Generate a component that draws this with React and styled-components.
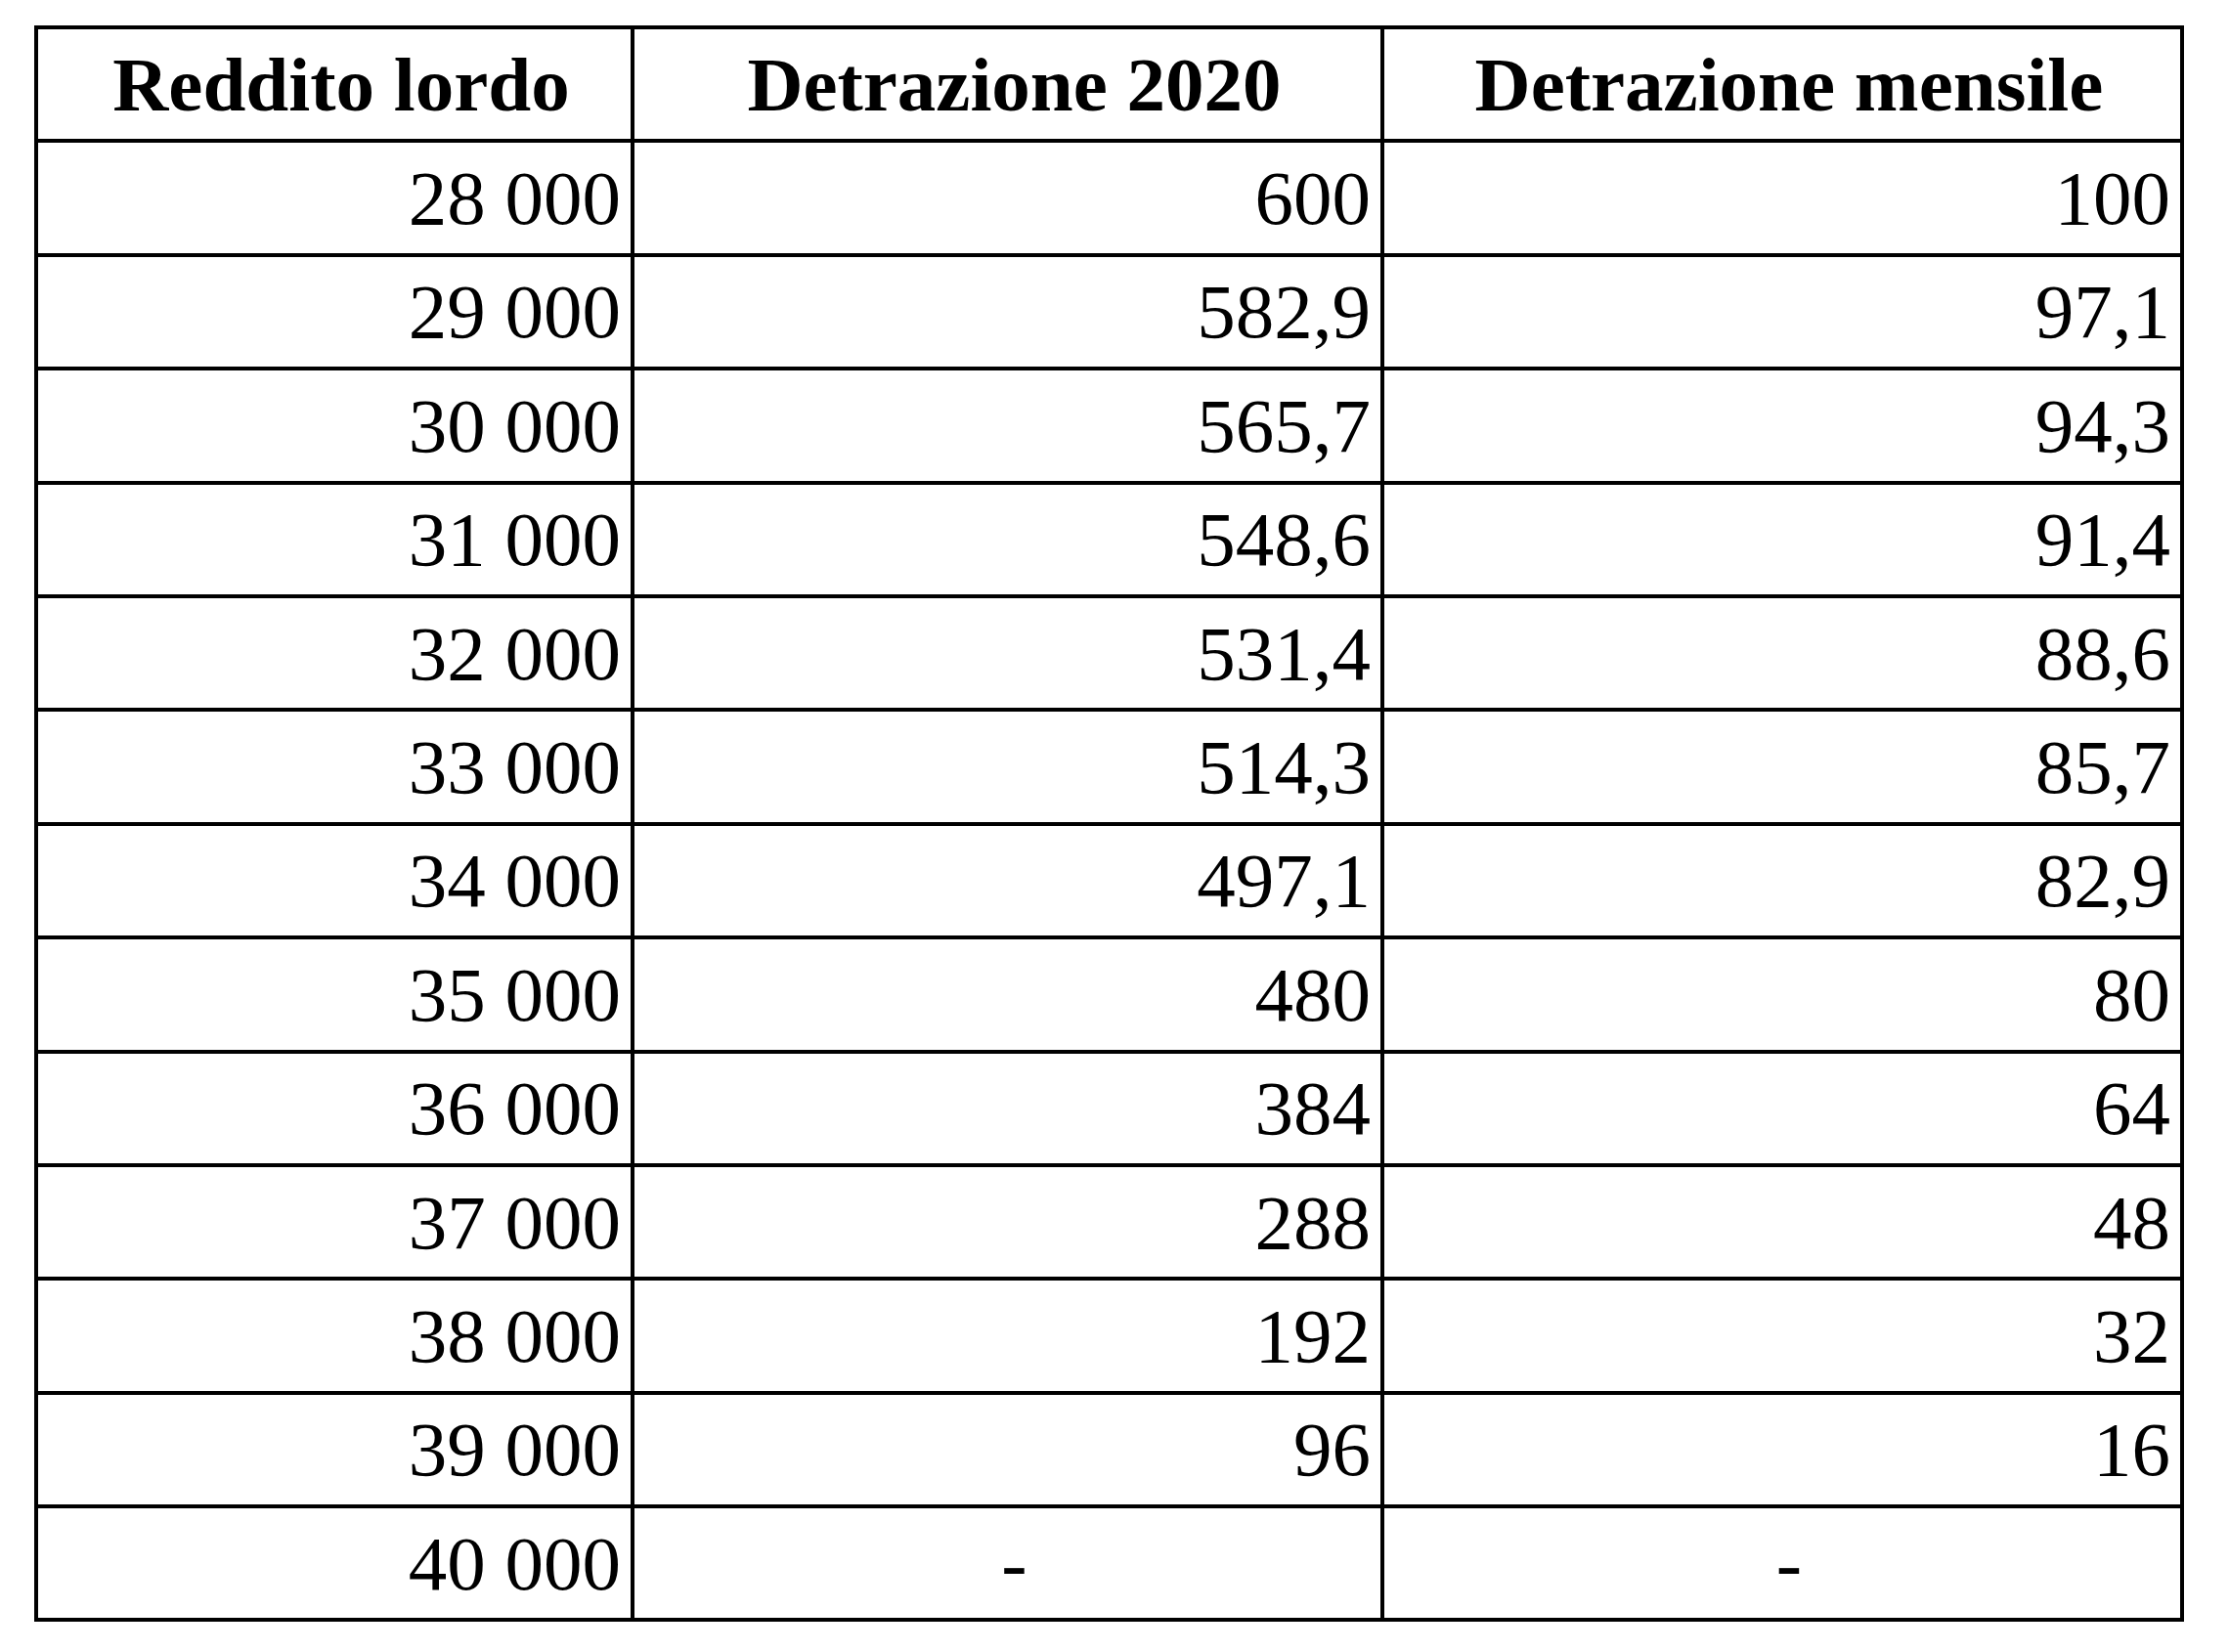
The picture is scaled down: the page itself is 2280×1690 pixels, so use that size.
import React from 'react';
import styled, { createGlobalStyle } from 'styled-components';

const GlobalStyle = createGlobalStyle`
  html, body {
    margin: 0;
    padding: 0;
    background: #fff;
  }
  body {
    font-family: "Liberation Serif", "Times New Roman", serif;
    color: #000;
  }
`;

const Page = styled.div`
  padding: 26px 0 0 35px;
`;

const Table = styled.table`
  border-collapse: separate;
  border-spacing: 0;
  table-layout: fixed;
  width: 2199px;
  border-top: 4px solid #000;
  border-left: 4px solid #000;
  font-family: "Liberation Serif", "Times New Roman", serif;
  font-size: 79px;
  line-height: 1;
  color: #000;

  th, td {
    box-sizing: border-box;
    height: 116.4px;
    padding: 0 10px;
    border-right: 4px solid #000;
    border-bottom: 4px solid #000;
    vertical-align: middle;
    white-space: nowrap;
  }
`;

const Col = styled.col`
  width: ${({ w }) => w}px;
`;

const HeadCell = styled.th`
  font-weight: bold;
  text-align: center;
  && {
    padding: 0 4px 0 18px;
  }
`;

const Cell = styled.td`
  font-weight: normal;
  text-align: ${({ center }) => (center ? 'center' : 'right')};
  && {
    padding: ${({ center }) => (center ? '0 4px 0 18px' : '0 10px')};
  }
`;

const rows = [
  ['28 000', '600', '100'],
  ['29 000', '582,9', '97,1'],
  ['30 000', '565,7', '94,3'],
  ['31 000', '548,6', '91,4'],
  ['32 000', '531,4', '88,6'],
  ['33 000', '514,3', '85,7'],
  ['34 000', '497,1', '82,9'],
  ['35 000', '480', '80'],
  ['36 000', '384', '64'],
  ['37 000', '288', '48'],
  ['38 000', '192', '32'],
  ['39 000', '96', '16'],
  ['40 000', '-', '-'],
];

const App = () => (
  <>
    <GlobalStyle />
    <Page>
      <Table>
        <colgroup>
          <Col w={610} />
          <Col w={767} />
          <Col w={818} />
        </colgroup>
        <thead>
          <tr>
            <HeadCell>Reddito lordo</HeadCell>
            <HeadCell>Detrazione 2020</HeadCell>
            <HeadCell>Detrazione mensile</HeadCell>
          </tr>
        </thead>
        <tbody>
          {rows.map((r) => (
            <tr key={r[0]}>
              <Cell>{r[0]}</Cell>
              <Cell center={r[1] === '-'}>{r[1]}</Cell>
              <Cell center={r[2] === '-'}>{r[2]}</Cell>
            </tr>
          ))}
        </tbody>
      </Table>
    </Page>
  </>
);

export default App;
